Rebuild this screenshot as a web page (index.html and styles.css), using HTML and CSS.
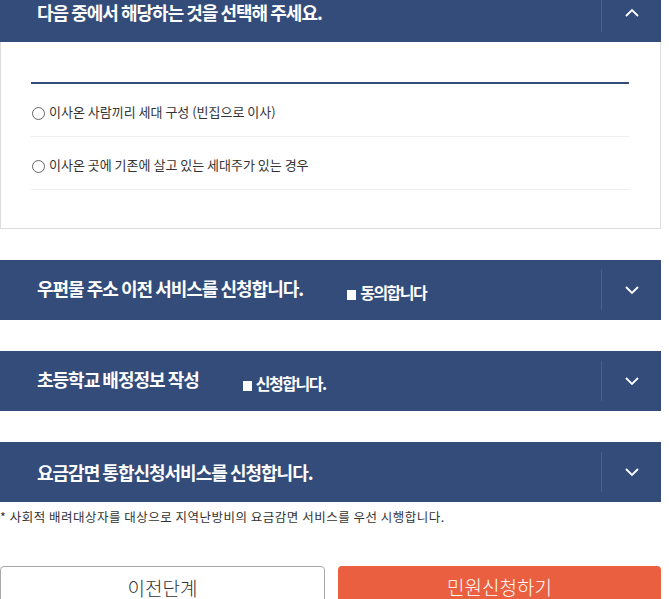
FILE: index.html
```html
<!doctype html>
<html>
<head>
    <meta charset="utf-8">
    <title>전입신고</title>
    <link rel="stylesheet" href="styles.css">
</head>
<body>
    <div class="apply">
        <div class="section open">
            <div class="section-head">
                <h3 class="section-title">다음 중에서 해당하는 것을 선택해 주세요.</h3>
                <button class="toggle" type="button">
                    <svg width="14" height="9" viewBox="0 0 14 9"><path d="M1 8 L7 2 L13 8" fill="none" stroke="#fff" stroke-width="1.8"/></svg>
                </button>
            </div>
            <div class="section-body">
                <ul class="choice-list">
                    <li><label><input type="radio" name="move_type" class="radio"> 이사온 사람끼리 세대 구성 (빈집으로 이사)</label></li>
                    <li><label><input type="radio" name="move_type" class="radio"> 이사온 곳에 기존에 살고 있는 세대주가 있는 경우</label></li>
                </ul>
            </div>
        </div>

        <div class="section">
            <div class="section-head">
                <h3 class="section-title">우편물 주소 이전 서비스를 신청합니다.<span class="agree"><i class="box"></i>동의합니다</span></h3>
                <button class="toggle" type="button">
                    <svg width="14" height="9" viewBox="0 0 14 9"><path d="M1 1 L7 7 L13 1" fill="none" stroke="#fff" stroke-width="1.8"/></svg>
                </button>
            </div>
        </div>

        <div class="section">
            <div class="section-head">
                <h3 class="section-title">초등학교 배정정보 작성<span class="agree"><i class="box"></i>신청합니다.</span></h3>
                <button class="toggle" type="button">
                    <svg width="14" height="9" viewBox="0 0 14 9"><path d="M1 1 L7 7 L13 1" fill="none" stroke="#fff" stroke-width="1.8"/></svg>
                </button>
            </div>
        </div>

        <div class="section">
            <div class="section-head">
                <h3 class="section-title">요금감면 통합신청서비스를 신청합니다.</h3>
                <button class="toggle" type="button">
                    <svg width="14" height="9" viewBox="0 0 14 9"><path d="M1 1 L7 7 L13 1" fill="none" stroke="#fff" stroke-width="1.8"/></svg>
                </button>
            </div>
        </div>
        <p class="note">* 사회적 배려대상자를 대상으로 지역난방비의 요금감면 서비스를 우선 시행합니다.</p>

        <div class="buttons">
            <button class="btn btn-prev" type="button">이전단계</button>
            <button class="btn btn-submit" type="submit">민원신청하기</button>
        </div>
    </div>
</body>
</html>
```

FILE: styles.css
```css
body {
    margin: 0;
    background-color: #ffffff;
    color: #333333;
    font-family: "Noto Sans CJK KR", "Noto Sans", sans-serif;
}
.apply {
    width: 661px;
    margin-top: -18px;
}
.section + .section {
    margin-top: 31px;
}
.section-head {
    display: flex;
    align-items: center;
    height: 60px;
    background-color: #334c7a;
}
.section-title {
    flex: 1;
    margin: 0;
    padding-left: 37px;
    color: #ffffff;
    font-size: 18px;
    font-weight: 700;
    letter-spacing: -1px;
    line-height: 24px;
}
.agree {
    margin-left: 44px;
    font-size: 16px;
    letter-spacing: -1.5px;
    vertical-align: -3px;
}
.box {
    display: inline-block;
    width: 9px;
    height: 10px;
    margin-right: 4px;
    background-color: #ffffff;
    vertical-align: -1px;
}
.toggle {
    display: flex;
    align-items: center;
    justify-content: center;
    width: 60px;
    height: 40px;
    padding: 0;
    background: none;
    border: none;
    border-left: 1px solid #4a6190;
    cursor: pointer;
}
.section-body {
    padding: 40px 31px 38px 30px;
    border: 1px solid #dddddd;
    border-top: none;
}
.choice-list {
    margin: 0;
    padding: 0;
    list-style: none;
    border-top: 2px solid #334c7a;
}
.choice-list li {
    padding: 18px 0 14px;
    border-bottom: 1px solid #eeeeee;
    font-size: 13px;
    line-height: 20px;
}
.choice-list label {
    display: flex;
    align-items: center;
}
.radio {
    appearance: none;
    width: 13px;
    height: 13px;
    margin: 2px 4px 0 1px;
    border: 1.5px solid #666666;
    border-radius: 50%;
}
.note {
    margin: 6px 0 0;
    font-size: 12.5px;
    letter-spacing: 0.5px;
    line-height: 18px;
}
.buttons {
    display: flex;
    gap: 13px;
    margin-top: 40px;
}
.btn {
    flex: 1;
    height: 42px;
    border-radius: 4px;
    font-family: "Noto Sans CJK KR", "Noto Sans", sans-serif;
    font-size: 19px;
    font-weight: 300;
    line-height: 40px;
    cursor: pointer;
}
.btn-prev {
    background-color: #ffffff;
    color: #333333;
    border: 1px solid #aaaaaa;
}
.btn-submit {
    background-color: #ea5f3f;
    color: #ffffff;
    border: none;
}
```
